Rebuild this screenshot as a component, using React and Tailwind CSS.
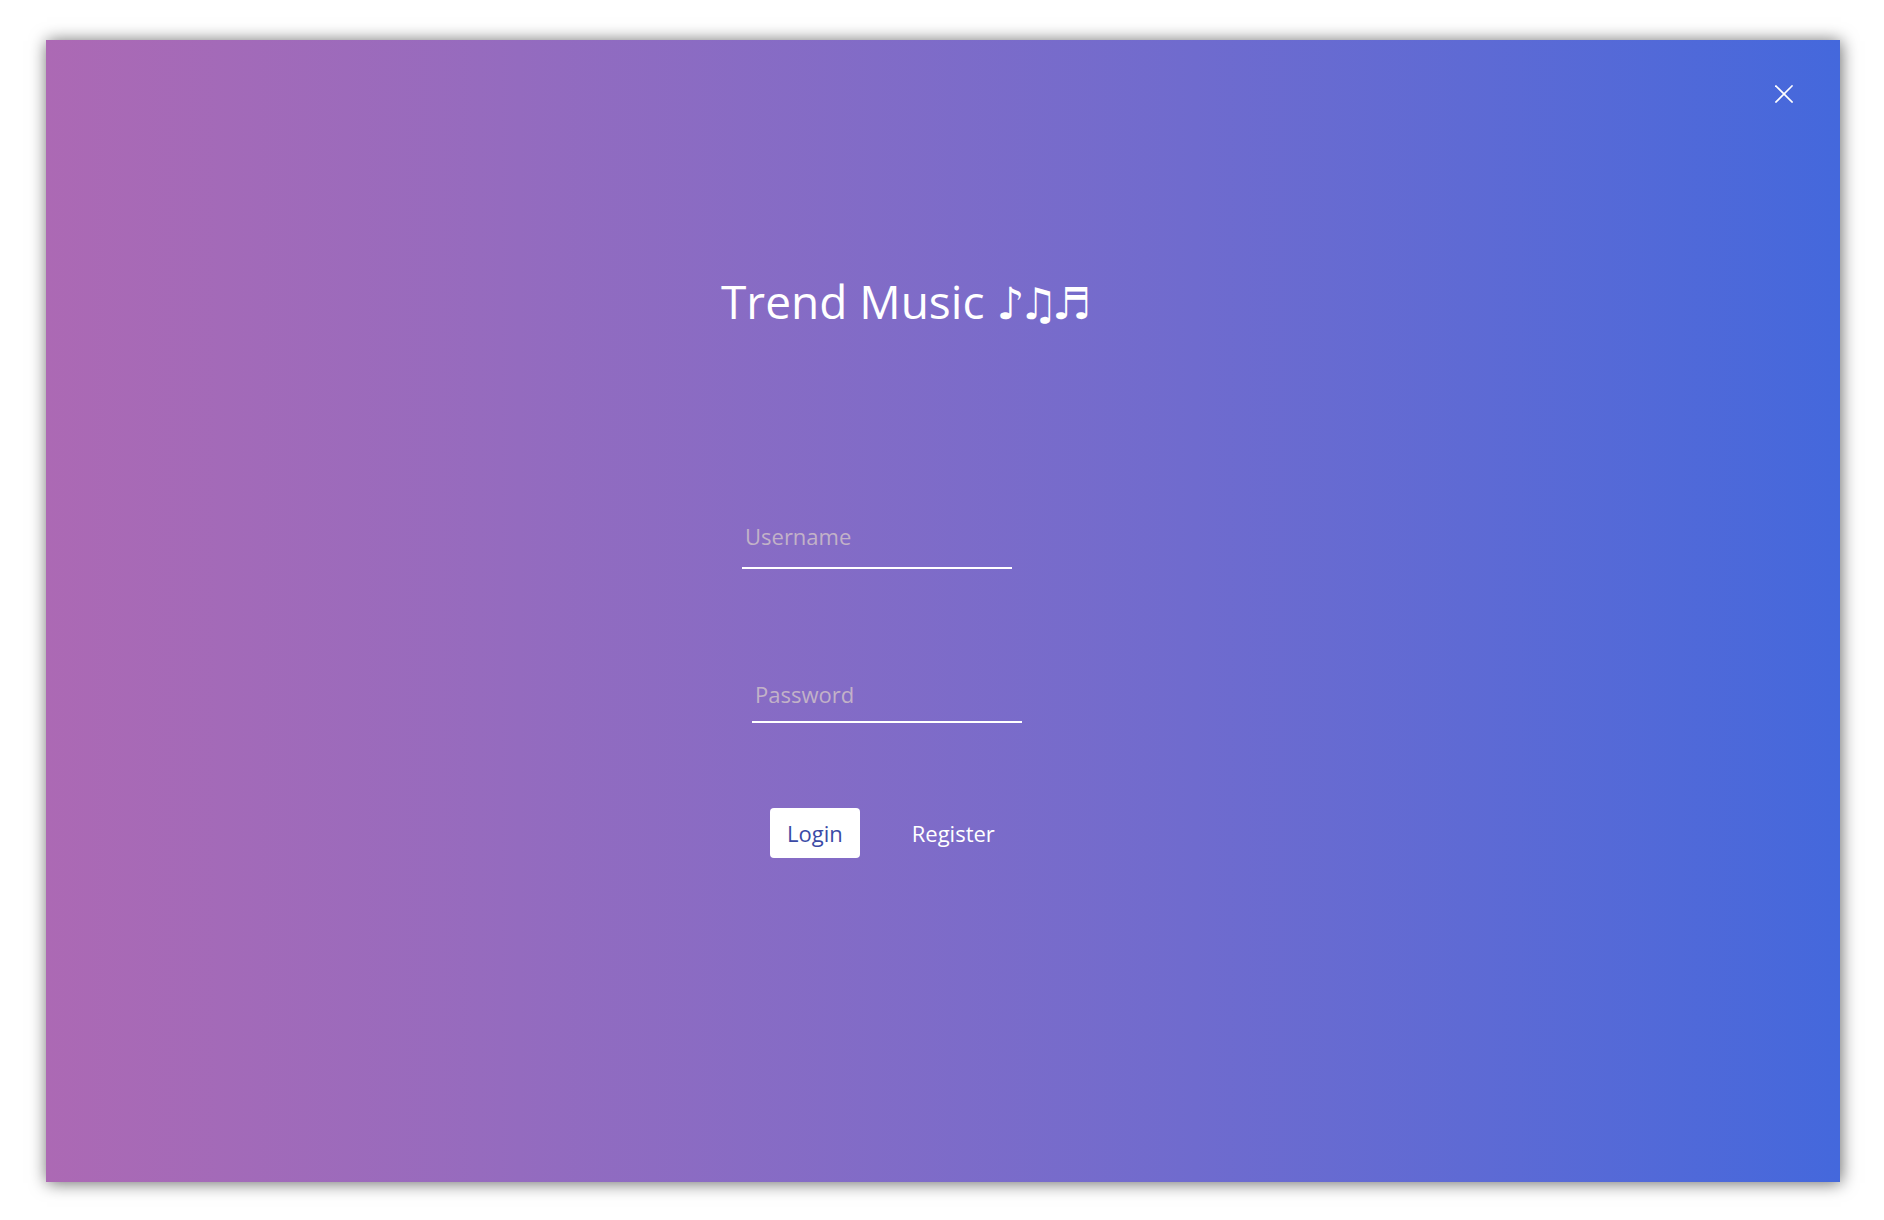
import { useState } from "react"

export default function App() {
  const [username, setUsername] = useState("")
  const [password, setPassword] = useState("")

  return (
    <div
      className="min-h-[1220px] w-full bg-white pl-[46px] pt-[40px]"
      style={{ fontFamily: '"Open Sans", "Noto Sans", "DejaVu Sans", sans-serif' }}
    >
      <div className="relative flex h-[1142px] w-[1794px] flex-col bg-gradient-to-r from-[#ac69b4] to-[#4468dc] pl-[675px] pt-[238px] shadow-[1px_1px_16px_rgba(0,0,0,0.6)]">
        <button className="absolute right-[47px] top-[45px] text-white">
          <svg width="18" height="18" viewBox="0 0 18 18" fill="none" stroke="white" strokeWidth="1.6" strokeLinecap="square">
            <line x1="1" y1="1" x2="17" y2="17" />
            <line x1="17" y1="1" x2="1" y2="17" />
          </svg>
        </button>

        <h1 className="text-[46px] font-normal leading-[46px] text-white">
          Trend Music{" "}
          <span className="text-[44px] tracking-[-6px]" style={{ fontFamily: '"DejaVu Sans", sans-serif' }}>
            ♪♫♬
          </span>
        </h1>

        <input
          type="text"
          placeholder="Username"
          value={username}
          onChange={(e) => setUsername(e.target.value)}
          className="ml-[21px] mt-[194px] h-[48px] w-[270px] border-b-2 border-white bg-transparent pb-[16px] pl-[3px] text-[22px] leading-[30px] text-white outline-none placeholder:text-[#c2b2c8]"
        />

        <input
          type="password"
          placeholder="Password"
          value={password}
          onChange={(e) => setPassword(e.target.value)}
          className="ml-[31px] mt-[110px] h-[44px] w-[270px] border-b-2 border-white bg-transparent pb-[12px] pl-[3px] text-[22px] leading-[30px] text-white outline-none placeholder:text-[#c2b2c8]"
        />

        <div className="ml-[49px] mt-[85px] flex items-center">
          <button className="h-[50px] rounded-[4px] bg-white px-[17px] text-[22px] text-[#3b4aa6]">
            Login
          </button>
          <button className="ml-[52px] text-[22px] text-white">Register</button>
        </div>
      </div>
    </div>
  )
}
